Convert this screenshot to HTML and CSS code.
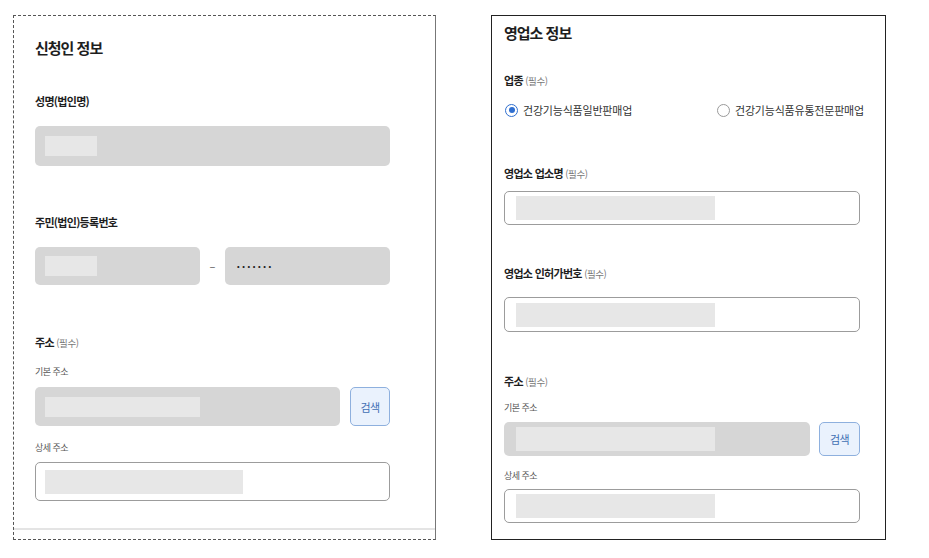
FILE: index.html
```html
<!DOCTYPE html>
<html lang="ko">
<head>
<meta charset="utf-8">
<title>신청인 정보 / 영업소 정보</title>
<link rel="stylesheet" href="styles.css">
</head>
<body>
<div class="page">
  <section class="panel panel-left">
    <h2 class="title">신청인 정보</h2>

    <div class="label l-name">성명(법인명)</div>
    <div class="input gray h40 m17"><span class="mask w52"></span></div>

    <div class="label l-reg">주민(법인)등록번호</div>
    <div class="reg-row">
      <div class="input gray h38 reg-part"><span class="mask w52"></span></div>
      <span class="dash">–</span>
      <div class="input gray h38 reg-part"><span class="dots">•••••••</span></div>
    </div>

    <div class="label l-addr">주소 <span class="req">(필수)</span></div>
    <div class="sublabel s-basic">기본 주소</div>
    <div class="addr-row m9">
      <div class="input gray h39 grow"><span class="mask w155"></span></div>
      <button class="btn btn-left" type="button">검색</button>
    </div>
    <div class="sublabel s-detail">상세 주소</div>
    <div class="input white h39 m8"><span class="mask w198 tall"></span></div>

    <div class="divider"></div>
  </section>

  <section class="panel panel-right">
    <h2 class="title">영업소 정보</h2>

    <div class="label r-type">업종 <span class="req">(필수)</span></div>
    <div class="radio-row">
      <label class="radio first"><span class="dot on"></span><span class="rtext">건강기능식품일반판매업</span></label>
      <label class="radio"><span class="dot"></span><span class="rtext">건강기능식품유통전문판매업</span></label>
    </div>

    <div class="label r-name">영업소 업소명 <span class="req">(필수)</span></div>
    <div class="input white h34 m10 rpad"><span class="mask w199 tall"></span></div>

    <div class="label r-lic">영업소 인허가번호 <span class="req">(필수)</span></div>
    <div class="input white h35 m16 rpad"><span class="mask w199 tall"></span></div>

    <div class="label r-addr">주소 <span class="req">(필수)</span></div>
    <div class="sublabel r-basic">기본 주소</div>
    <div class="addr-row m8">
      <div class="input gray h34 grow rpad"><span class="mask w199 tall"></span></div>
      <button class="btn btn-right" type="button">검색</button>
    </div>
    <div class="sublabel r-detail">상세 주소</div>
    <div class="input white h34 m7 rpad"><span class="mask w199 tall"></span></div>
  </section>
</div>
</body>
</html>
```

FILE: styles.css
```css
body {
  margin: 0;
  background: #fff;
  font-family: "Noto Sans CJK KR", "Noto Sans", sans-serif;
  color: #222;
}

.page {
  display: flex;
  align-items: flex-start;
  gap: 55px;
  padding: 15px 0 0 13px;
}

.panel {
  box-sizing: border-box;
  height: 525px;
  display: flex;
  flex-direction: column;
}

.panel-left {
  width: 423px;
  border: 1px dashed #555;
  border-right: 1px solid #777;
  padding: 22px 45px 0 21px;
}

.panel-right {
  width: 395px;
  border: 1px solid #222;
  padding: 7px 25px 0 12px;
}

.title {
  margin: 0;
  height: 20px;
  font-size: 15px;
  line-height: 20px;
  font-weight: 700;
  letter-spacing: -1px;
  color: #1e1e1e;
  white-space: nowrap;
}

.label {
  height: 16px;
  font-size: 11px;
  line-height: 16px;
  font-weight: 700;
  letter-spacing: -0.7px;
  color: #1e1e1e;
  white-space: nowrap;
}

.req {
  font-size: 9.5px;
  line-height: 0;
  font-weight: 400;
  color: #777;
  letter-spacing: -0.4px;
}

.sublabel {
  height: 12px;
  font-size: 9px;
  line-height: 12px;
  letter-spacing: -0.5px;
  color: #555;
  white-space: nowrap;
}

.l-name { margin-top: 35px; }
.l-reg { margin-top: 48px; }
.l-addr { margin-top: 49px; }
.s-basic { margin-top: 16px; }
.s-detail { margin-top: 16px; }

.r-type { margin-top: 29px; }
.r-name { margin-top: 47px; }
.r-lic { margin-top: 40px; }
.r-addr { margin-top: 41px; }
.r-basic { margin-top: 13px; }
.r-detail { margin-top: 14px; }

.input {
  box-sizing: border-box;
  border-radius: 5px;
  display: flex;
  align-items: center;
  padding-left: 10px;
  flex-shrink: 0;
}

.input.rpad { padding-left: 12px; }

.gray { background: #d6d6d6; }
.white { background: #fff; border: 1px solid #9c9c9c; padding-left: 9px; }
.white.rpad { padding-left: 11px; }

.h34 { height: 34px; }
.h35 { height: 35px; }
.h38 { height: 38px; }
.h39 { height: 39px; }
.h40 { height: 40px; }

.m7 { margin-top: 7px; }
.m8 { margin-top: 8px; }
.m9 { margin-top: 9px; }
.m10 { margin-top: 10px; }
.m16 { margin-top: 16px; }
.m17 { margin-top: 17px; }

.mask {
  display: block;
  height: 20px;
  background: #e7e7e7;
}
.mask.tall { height: 24px; }
.w52 { width: 52px; }
.w155 { width: 155px; }
.w198 { width: 198px; }
.w199 { width: 199px; }

.reg-row {
  display: flex;
  align-items: center;
  margin-top: 17px;
}

.reg-part { width: 165px; }

.dash {
  width: 25px;
  text-align: center;
  font-size: 11px;
  color: #555;
}

.dots {
  font-size: 7px;
  font-weight: 700;
  letter-spacing: 2.6px;
  color: #222;
  padding-left: 2px;
}

.addr-row {
  display: flex;
  align-items: stretch;
  flex-shrink: 0;
}

.grow { flex: 1; }

.btn {
  box-sizing: border-box;
  margin: 0;
  padding: 0;
  border: 1px solid #8eb0de;
  border-radius: 5px;
  background: #eaf2fd;
  color: #3f6fb3;
  font-family: inherit;
  font-size: 11px;
  letter-spacing: -0.5px;
}

.btn-left { width: 40px; margin-left: 10px; }
.btn-right { width: 41px; margin-left: 9px; }

.divider {
  height: 2px;
  background: #e4e4e4;
  margin: 27px -45px 0 -21px;
}

.radio-row {
  display: flex;
  align-items: center;
  margin-top: 14px;
  height: 16px;
}

.radio {
  display: flex;
  align-items: center;
  gap: 5px;
  flex-shrink: 0;
  white-space: nowrap;
}

.radio.first { width: 212px; margin-left: 1px; }

.dot {
  box-sizing: border-box;
  flex-shrink: 0;
  width: 13px;
  height: 13px;
  border-radius: 50%;
  border: 1px solid #9a9a9a;
  background: #fff;
  display: flex;
  align-items: center;
  justify-content: center;
}

.dot.on {
  border: 1.5px solid #2f6fd0;
}

.dot.on::after {
  content: "";
  width: 6px;
  height: 6px;
  border-radius: 50%;
  background: #2f6fd0;
}

.rtext {
  font-size: 11px;
  line-height: 16px;
  letter-spacing: -0.2px;
  color: #333;
  white-space: nowrap;
}
```
